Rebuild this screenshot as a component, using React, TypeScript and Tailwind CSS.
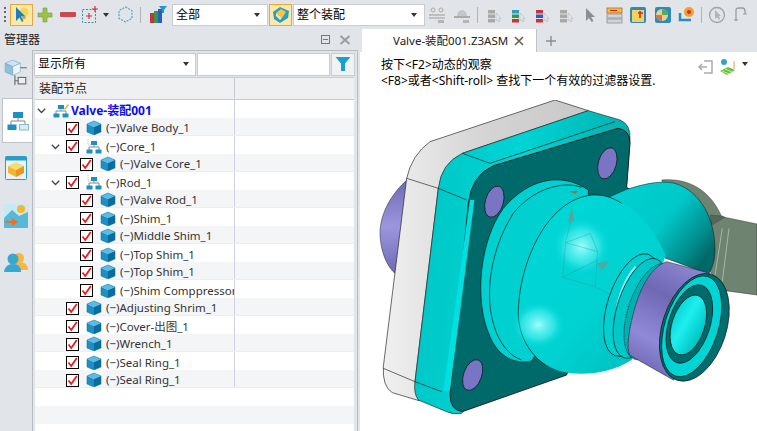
import React from "react";

const FONT = { fontFamily: '"Noto Sans", "Noto Sans CJK SC", sans-serif' };

function Cube({ size = 16 }: { size?: number }) {
  return (
    <svg width={size} height={size} viewBox="0 0 16 16" className="shrink-0">
      <path d="M8 1 L15 4 L8 7 L1 4 Z" fill="#58bde6" />
      <path d="M1 4 L8 7 L8 15 L1 12 Z" fill="#1c8fc4" />
      <path d="M15 4 L8 7 L8 15 L15 12 Z" fill="#0b6d9e" />
      <path d="M8 1 L15 4 L15 12 L8 15 L1 12 L1 4 Z" fill="none" stroke="#0a6a98" strokeWidth="0.5" />
    </svg>
  );
}

function Hier({ pen }: { pen?: boolean }) {
  return (
    <svg width="16" height="16" viewBox="0 0 16 16" className="shrink-0">
      <path d="M8 5 V8 M3 11 V8 H13 V11" stroke="#888" fill="none" />
      <rect x="5" y="2" width="6" height="4" fill="#1c8fc4" />
      <rect x="0.5" y="10.5" width="6" height="4" fill="#1c8fc4" />
      <rect x="9.5" y="10.5" width="6" height="4" fill="#1c8fc4" />
      {pen ? <path d="M11 6 L15 1 L16 2 L12 7 Z" fill="#e6b030" /> : <path d="M2 0 V6 H5" stroke="#bbb" fill="none" strokeDasharray="1 1" />}
    </svg>
  );
}

function Check() {
  return (
    <span className="w-[13px] h-[13px] border border-black bg-white flex items-center justify-center shrink-0">
      <svg width="11" height="11" viewBox="0 0 11 11">
        <path d="M1.5 5.5 L4.2 9 L9.8 1" stroke="#f01818" strokeWidth="1.8" fill="none" />
      </svg>
    </span>
  );
}

function Chevron() {
  return (
    <svg width="9" height="6" viewBox="0 0 9 6" className="shrink-0">
      <path d="M0.8 0.8 L4.5 4.5 L8.2 0.8" stroke="#444" strokeWidth="1.3" fill="none" />
    </svg>
  );
}

function Caret() {
  return <span className="w-0 h-0 border-l-[3.5px] border-r-[3.5px] border-t-[4px] border-l-transparent border-r-transparent border-t-[#333] shrink-0" />;
}

function Gray({ children, w = 24 }: { children: React.ReactNode; w?: number }) {
  return (
    <span className="flex items-center justify-center shrink-0" style={{ width: w }}>
      <svg width="20" height="20" viewBox="0 0 20 20">{children}</svg>
    </span>
  );
}

const rows: { t: string; lvl: 1 | 2; kind: "cube" | "hier"; chev?: boolean }[] = [
  { t: "(−)Valve Body_1", lvl: 1, kind: "cube" },
  { t: "(−)Core_1", lvl: 1, kind: "hier", chev: true },
  { t: "(−)Valve Core_1", lvl: 2, kind: "cube" },
  { t: "(−)Rod_1", lvl: 1, kind: "hier", chev: true },
  { t: "(−)Valve Rod_1", lvl: 2, kind: "cube" },
  { t: "(−)Shim_1", lvl: 2, kind: "cube" },
  { t: "(−)Middle Shim_1", lvl: 2, kind: "cube" },
  { t: "(−)Top Shim_1", lvl: 2, kind: "cube" },
  { t: "(−)Top Shim_1", lvl: 2, kind: "cube" },
  { t: "(−)Shim Comppressor", lvl: 2, kind: "cube" },
  { t: "(−)Adjusting Shrim_1", lvl: 1, kind: "cube" },
  { t: "(−)Cover-出图_1", lvl: 1, kind: "cube" },
  { t: "(−)Wrench_1", lvl: 1, kind: "cube" },
  { t: "(−)Seal Ring_1", lvl: 1, kind: "cube" },
  { t: "(−)Seal Ring_1", lvl: 1, kind: "cube" },
];

function Toolbar() {
  return (
    <div className="h-[29px] flex items-center shrink-0 pl-[3px]">
      <span className="w-[4px] h-[16px] mr-[3px] flex flex-col justify-between items-center shrink-0">
        <i className="w-[2px] h-[2px] bg-[#667]" /><i className="w-[2px] h-[2px] bg-[#667]" /><i className="w-[2px] h-[2px] bg-[#667]" /><i className="w-[2px] h-[2px] bg-[#667]" />
      </span>
      <span className="w-[23px] h-[22px] bg-[#fde9a6] border border-[#e5a83e] flex items-center justify-center shrink-0">
        <svg width="18" height="18" viewBox="0 0 18 18">
          <circle cx="11" cy="6" r="4.5" fill="#f3d65a" />
          <rect x="9.5" y="10" width="3" height="3" fill="#caa040" />
          <path d="M3 1 L3 15 L6.5 11.5 L9 16 L10.5 15 L8 10.5 L12 10 Z" fill="#1c7fc0" />
        </svg>
      </span>
      <span className="w-[23px] flex justify-center shrink-0">
        <svg width="16" height="16" viewBox="0 0 16 16"><path d="M6 1 H10 V6 H15 V10 H10 V15 H6 V10 H1 V6 H6 Z" fill="#9cc24c" stroke="#7a9c38" strokeWidth="0.6" /></svg>
      </span>
      <span className="w-[24px] flex justify-center shrink-0">
        <span className="w-[16px] h-[5px] rounded-[1px] bg-[#c84a50]" />
      </span>
      <span className="w-[20px] flex justify-center shrink-0">
        <svg width="18" height="18" viewBox="0 0 18 18">
          <rect x="1.5" y="3.5" width="13" height="13" fill="none" stroke="#3a8ca8" strokeDasharray="2 1.5" />
          <path d="M8 7 V13 M5 10 H11 M14 0 V6 M11 3 H17" stroke="#d0343c" strokeWidth="1.2" />
        </svg>
      </span>
      <span className="w-[12px] flex justify-center shrink-0"><Caret /></span>
      <span className="w-[26px] flex justify-center shrink-0">
        <svg width="17" height="17" viewBox="0 0 17 17"><path d="M8.5 1 L15 4.7 V12.3 L8.5 16 L2 12.3 V4.7 Z" fill="none" stroke="#5fa0b8" strokeDasharray="2 1.2" strokeWidth="1.2" /></svg>
      </span>
      <span className="w-px h-[16px] bg-[#b0b4b8] ml-[2px] mr-[7px] shrink-0" />
      <span className="w-[20px] flex justify-center mr-[4px] shrink-0">
        <svg width="18" height="18" viewBox="0 0 18 18">
          <rect x="1" y="7" width="4" height="10" fill="#c8323a" /><rect x="5" y="5" width="4" height="12" fill="#2e9a4a" /><rect x="9" y="3" width="4" height="14" fill="#2c5cc0" />
          <path d="M10 0 H18 L15 4 V7 H13 V4 Z" fill="#1c9cc8" />
        </svg>
      </span>
      <span className="w-[96px] h-[22px] bg-white border border-[#c8ccd0] flex items-center pl-[3px] pr-[7px] justify-between text-[12px] text-black shrink-0"><span>全部</span><Caret /></span>
      <span className="w-[23px] h-[22px] ml-[1px] bg-[#fde9a6] border border-[#e5a83e] flex items-center justify-center shrink-0">
        <svg width="18" height="18" viewBox="0 0 18 18">
          <path d="M1 6 L8 1 L17 5 L16 12 L8 17 L2 13 Z" fill="#2a9cc8" />
          <path d="M4 7 L9 3 L14 6 L10 12 Z" fill="#f4c83c" /><path d="M4 7 L10 12 L8 14 L4 10 Z" fill="#f8e8a0" />
        </svg>
      </span>
      <span className="w-[132px] h-[22px] ml-[1px] bg-white border border-[#c8ccd0] flex items-center pl-[3px] pr-[7px] justify-between text-[12px] text-black shrink-0"><span>整个装配</span><Caret /></span>
      <Gray w={23}><circle cx="6" cy="5" r="2" fill="none" stroke="#aaa" /><circle cx="14" cy="5" r="2" fill="none" stroke="#aaa" /><path d="M2 10 H18 M2 13 H18" stroke="#999" /><rect x="11" y="15" width="6" height="3" fill="#b4b4b4" /></Gray>
      <Gray w={27}><path d="M5 11 A5 6 0 0 1 15 11 Z" fill="#c4c6ca" /><path d="M2 12 H18" stroke="#999" strokeWidth="1.5" /><rect x="11" y="15" width="6" height="3" fill="#b4b4b4" /></Gray>
      <span className="w-px h-[16px] bg-[#b0b4b8] mx-[2px] shrink-0" />
      <span className="w-[3px] shrink-0" />
      {[["#a8a8a8", "#a8a8a8", "#a8a8a8"], ["#2a9cc8", "#2e9a4a", "#c8323a"], ["#c8323a", "#2c5cc0", "#c8323a"], ["#a8a8a8", "#a8a8a8", "#a8a8a8"]].map((c, i) => (
        <Gray key={i} w={24}>
          <rect x="3" y="5" width="7" height="3.5" fill={c[0]} /><rect x="3" y="9.5" width="7" height="3.5" fill={c[1]} /><rect x="3" y="14" width="7" height="3.5" fill={c[2]} />
          <path d="M11 8 V16 L12.5 14.5 L14 17 L15 16 L14 13.5 L16 13.5 Z" fill="#e4e8ec" stroke="#b0b8c0" strokeWidth="0.6" />
        </Gray>
      ))}
      <Gray w={22}><path d="M6 3 V16 L9 13 L11.5 17 L13.5 16 L11 12 L15 12 Z" fill="#8a8f96" /></Gray>
      <Gray w={25}><rect x="3" y="3" width="15" height="5" fill="#f0c040" stroke="#a06030" strokeWidth="0.7" /><path d="M6 5.5 H13" stroke="#d02020" /><rect x="3" y="9" width="15" height="4" fill="#d0d4d8" stroke="#808890" strokeWidth="0.7" /><rect x="3" y="14" width="15" height="4" fill="#d0d4d8" stroke="#808890" strokeWidth="0.7" /></Gray>
      <Gray w={24}><rect x="2" y="2" width="16" height="16" rx="2" fill="#2a8cb8" /><rect x="4" y="5" width="12" height="12" fill="#f4d060" /><path d="M10 8 H15 M12 6 V13" stroke="#d02828" strokeWidth="1.6" /></Gray>
      <Gray w={25}><rect x="2" y="2" width="16" height="16" rx="2" fill="#2a8cb8" /><circle cx="9" cy="10" r="6" fill="#e8d090" /><path d="M9 4 A6 6 0 0 1 15 10 H9 Z" fill="#58a860" /><path d="M3 10 H9 V16 A6 6 0 0 1 3 10" fill="#e07040" /></Gray>
      <Gray w={24}><path d="M3 8 V15 H14" stroke="#2a8cb8" strokeWidth="2.5" fill="none" /><circle cx="12" cy="7" r="5" fill="#f0a030" /><circle cx="12" cy="7" r="2" fill="#d03030" /></Gray>
      <span className="w-px h-[16px] bg-[#b0b4b8] mx-[2px] shrink-0" />
      <Gray w={26}><circle cx="10" cy="10" r="7.5" fill="none" stroke="#a0a4a8" strokeWidth="1.3" /><path d="M8 5 V14 L10 12 L12 15 L13 14 L12 11 L14 11 Z" fill="#b0b4b8" /></Gray>
      <Gray w={22}><path d="M5 16 V5 Q5 3 8 3 H11 Q14 3 14 6 V9" fill="none" stroke="#9a9ea2" strokeWidth="1.3" /><path d="M3 15 H7 M12 9 H16" stroke="#9a9ea2" /></Gray>
    </div>
  );
}

function Rail() {
  return (
    <div className="w-[32px] flex flex-col items-center shrink-0">
      <div className="h-[48px] flex flex-col items-center pt-[9px] shrink-0 w-full">
        <svg width="24" height="39" viewBox="0 0 22 36">
          <path d="M8 1 L15 4 L8 7 L1 4 Z" fill="#cfe4f0" stroke="#6aa0c0" strokeWidth="0.5" />
          <path d="M1 4 L8 7 V15 L1 12 Z" fill="#8cc0dc" stroke="#6aa0c0" strokeWidth="0.5" />
          <path d="M15 4 L8 7 V15 L15 12 Z" fill="#eef5fa" stroke="#6aa0c0" strokeWidth="0.5" />
          <path d="M15 8 H21 M10 15 V24 M10 20 H13" stroke="#666" fill="none" />
          <rect x="13" y="17" width="7" height="6" fill="#eee" stroke="#666" />
        </svg>
      </div>
      <div className="w-[30px] ml-[2px] h-[45px] bg-white border border-r-0 border-[#c0c4c8] flex items-center justify-center shrink-0">
        <svg width="22" height="20" viewBox="0 0 22 20">
          <path d="M11 6 V10 M4 14 V10 H18 V14" stroke="#888" fill="none" />
          <rect x="6" y="1" width="10" height="6" fill="#1c8fc4" />
          <rect x="0.5" y="13.5" width="9" height="5.5" fill="#1c8fc4" />
          <rect x="12.5" y="13.5" width="9" height="5.5" fill="#d8ecf6" stroke="#8cb8d0" />
        </svg>
      </div>
      <div className="h-[48px] flex items-center justify-center shrink-0 pt-[2px]">
        <svg width="22" height="24" viewBox="0 0 22 24">
          <rect x="0.5" y="0.5" width="21" height="23" rx="1" fill="#e8f4fa" stroke="#2a9cc8" />
          <rect x="0.5" y="0.5" width="21" height="4" fill="#2a9cc8" />
          <path d="M11 6 L19 10 L11 14 L3 10 Z" fill="#f8dc70" />
          <path d="M3 10 L11 14 V21 L3 17 Z" fill="#f0b830" /><path d="M19 10 L11 14 V21 L19 17 Z" fill="#e89820" />
        </svg>
      </div>
      <div className="h-[50px] flex items-center justify-center shrink-0">
        <svg width="24" height="24" viewBox="0 0 24 24">
          <rect width="24" height="24" fill="#c8e8f4" />
          <path d="M0 14 L8 6 L15 12 L24 8 V24 H0 Z" fill="#58b8d8" />
          <circle cx="17" cy="5" r="4" fill="#f4b830" />
          <path d="M1 17 H8 V14 L14 18 L8 22 V19 H1 Z" fill="#f07020" />
        </svg>
      </div>
      <div className="h-[44px] flex items-center justify-center shrink-0">
        <svg width="24" height="22" viewBox="0 0 24 22">
          <circle cx="15" cy="6" r="5" fill="#f8b840" /><path d="M10 18 Q10 10 15 10 Q24 10 24 18 Z" fill="#f8b840" />
          <circle cx="9" cy="7" r="5.5" fill="#38a8d0" /><path d="M0 20 Q1 12 9 12 Q17 12 17 20 Z" fill="#38a8d0" />
        </svg>
      </div>
    </div>
  );
}

function Manager() {
  return (
    <div className="w-[358px] flex flex-col shrink-0 min-h-0">
      <div className="h-[21px] flex items-center shrink-0 pl-[4px] pr-[6px] text-[12px] text-[#222]">
        <span className="flex-1">管理器</span>
        <span className="w-[9px] h-[9px] border border-[#777] flex items-center justify-center mr-[9px]"><i className="w-[5px] h-px bg-[#777]" /></span>
        <svg width="12" height="10" viewBox="0 0 12 10" className="mr-[1px]"><path d="M1.5 1 L10.5 9 M10.5 1 L1.5 9" stroke="#9a9ea2" strokeWidth="2" fill="none" /></svg>
      </div>
      <div className="flex-1 flex min-h-0">
        <Rail />
        <div className="w-[326px] border border-b-0 border-[#b8bcc0] flex flex-col min-h-0 overflow-hidden">
          <div className="h-[26px] flex items-center gap-[1px] shrink-0 pl-[1px]">
            <span className="w-[162px] h-[23px] bg-white border border-[#c8ccd0] flex items-center justify-between pl-[3px] pr-[6px] text-[12px] text-black"><span>显示所有</span><Caret /></span>
            <span className="w-[133px] h-[23px] bg-white border border-[#c8ccd0]" />
            <span className="w-[24px] h-[23px] bg-[#f0f2f4] border border-[#c8ccd0] flex items-center justify-center">
              <svg width="16" height="16" viewBox="0 0 16 16"><path d="M0.5 1 H15.5 L10 7.5 V15 H6 V7.5 Z" fill="#1aa0d0" /></svg>
            </span>
          </div>
          <div className="flex-1 flex flex-col min-h-0 ml-[2px] mr-[3px]">
            <div className="h-[23px] flex shrink-0 bg-[#eff0f2] border-t border-b border-[#c8ccd0] text-[12px] text-[#222] items-center">
              <span className="w-[200px] pl-[4px] border-r border-[#c8ccd0] h-full flex items-center">装配节点</span>
            </div>
            <div className="flex-1 min-h-0 bg-white overflow-hidden text-[11.5px] text-[#333]">
              <div className="h-[18px] flex">
                <div className="w-[200px] border-r border-[#d0d0e4] flex items-center pl-[2px] pt-[3px] shrink-0 overflow-hidden">
                  <Chevron />
                  <span className="w-[7px] shrink-0" />
                  <Hier pen />
                  <span className="ml-[2px] text-[12px] font-bold text-[#0a0aff] whitespace-nowrap">Valve-装配001</span>
                </div>
              </div>
              {rows.map((r, i) => (
                <div key={i} className={`h-[18px] flex ${i % 2 === 0 ? "bg-[#f4f5f7] border-b border-[#eceef0]" : "bg-white"}`}>
                  <div className={`w-[200px] border-r border-[#d0d0e4] flex items-center pt-[3px] shrink-0 overflow-hidden ${r.lvl === 1 ? "pl-[31px]" : "pl-[45px]"}`}>
                    <span className="relative flex items-center">
                      {r.chev && <span className="absolute -left-[15px] top-[4px]"><Chevron /></span>}
                      <Check />
                    </span>
                    <span className="w-[7px] shrink-0" />
                    {r.kind === "cube" ? <Cube /> : <Hier />}
                    <span className="ml-[4px] whitespace-nowrap">{r.t}</span>
                  </div>
                </div>
              ))}
              <div className="h-[18px]" />
              <div className="h-[18px] bg-[#f4f5f7]" />
            </div>
          </div>
        </div>
      </div>
    </div>
  );
}

function Model() {
  return (
    <svg viewBox="0 0 1146 993" width="382" height="331" className="absolute left-[15px] top-[48px]">
      <defs>
        <linearGradient id="cy" x1="0" y1="0" x2="1" y2="0.15">
          <stop offset="0" stopColor="#00c4c4" /><stop offset="0.5" stopColor="#00d4d4" /><stop offset="1" stopColor="#00b0b0" />
        </linearGradient>
        <linearGradient id="bulb" x1="0" y1="0" x2="0.9" y2="1">
          <stop offset="0" stopColor="#00d8d8" /><stop offset="0.6" stopColor="#00d2d2" /><stop offset="1" stopColor="#00bcbc" />
        </linearGradient>
        <linearGradient id="rear" x1="0" y1="0" x2="1" y2="0.7">
          <stop offset="0" stopColor="#00d2d2" /><stop offset="0.55" stopColor="#00c8c8" /><stop offset="0.85" stopColor="#008e8e" /><stop offset="1" stopColor="#006868" />
        </linearGradient>
        <linearGradient id="gr" x1="0" y1="0" x2="1" y2="0">
          <stop offset="0" stopColor="#f0f0f0" /><stop offset="0.5" stopColor="#d4d4d4" /><stop offset="1" stopColor="#c8c8c8" />
        </linearGradient>
        <linearGradient id="pu" x1="0.7" y1="0" x2="0.3" y2="1">
          <stop offset="0" stopColor="#8f89d6" /><stop offset="0.35" stopColor="#6f69b4" /><stop offset="0.72" stopColor="#9089d8" /><stop offset="1" stopColor="#6c66b0" />
        </linearGradient>
        <linearGradient id="pu2" x1="0" y1="0" x2="0" y2="1">
          <stop offset="0" stopColor="#6f69b4" /><stop offset="0.5" stopColor="#9c96de" /><stop offset="1" stopColor="#6f69b4" />
        </linearGradient>
        <linearGradient id="hole" x1="0" y1="0" x2="1" y2="0.4">
          <stop offset="0" stopColor="#00d0d0" /><stop offset="0.5" stopColor="#20eeee" /><stop offset="1" stopColor="#00c8c8" />
        </linearGradient>
        <radialGradient id="hi"><stop offset="0" stopColor="#a8ffff" stopOpacity="0.95" /><stop offset="0.6" stopColor="#50f0f0" stopOpacity="0.6" /><stop offset="1" stopColor="#00d8d8" stopOpacity="0" /></radialGradient>
      </defs>
      <path d="M98,238 C50,280 15,340 15,400 C15,450 35,500 62,522 Z" fill="url(#pu2)" stroke="#222" strokeWidth="1.5" />
      <path d="M860,240 C950,232 1010,280 1040,350 L1146,372 V585 L1050,572 L1010,522 Z" fill="#6f8470" stroke="#333" strokeWidth="1.5" />
      <path d="M1010,375 L1050,352 L1042,348 L1005,345 Z" fill="#55685a" stroke="#333" strokeWidth="1" />
      <path d="M1042,385 L1020,525 M1062,385 L1042,545" stroke="#c0d0c0" strokeWidth="2" />
      <path d="M165,125 L540,0 L640,32 L262,160 L190,265 L120,845 L132,902 L52,878 Q22,860 25,800 L95,235 Q110,165 165,125 Z" fill="url(#gr)" stroke="#222" strokeWidth="2" />
      <path d="M95,235 L190,265 M25,805 L120,845" stroke="#222" strokeWidth="2" />
      <path d="M262,160 L640,32 L735,60 Q768,72 765,120 L755,250 L260,940 Q235,945 215,935 L130,900 Q115,880 120,845 L190,265 Q198,190 262,160 Z" fill="url(#cy)" stroke="#222" strokeWidth="2" />
      <path d="M262,160 L345,190 M345,190 L720,65 M190,265 L275,300 M120,845 L200,875" stroke="#222" strokeWidth="2" />
      <path d="M355,197 L728,85 Q765,88 765,130 L755,262 Q762,270 775,268 L760,300 L575,825 L262,935 Q225,930 225,885 L280,310 Q290,225 355,197 Z" fill="#006a6a" stroke="#111" strokeWidth="2.5" />
      <path d="M285,300 L298,300 L225,870 L205,872 Z" fill="#00e0e0" />
      <ellipse cx="697" cy="190" rx="27" ry="48" transform="rotate(16 697 190)" fill="#7a74c4" stroke="#111" strokeWidth="2" />
      <ellipse cx="358" cy="305" rx="27" ry="48" transform="rotate(16 358 305)" fill="#7a74c4" stroke="#111" strokeWidth="2" />
      <ellipse cx="293" cy="825" rx="27" ry="48" transform="rotate(20 293 825)" fill="#7a74c4" stroke="#111" strokeWidth="2" />
      <path d="M700,292 L755,268 C790,258 850,238 900,250 C980,275 1020,360 1020,450 C1020,480 1012,505 1000,522 L860,470 Z" fill="url(#rear)" stroke="#111" strokeWidth="1.5" />
      <path d="M640,270 C560,215 460,235 385,325 C315,420 295,600 345,710 C370,770 420,795 470,783 L640,500 Z" fill="#00d0d0" stroke="#111" strokeWidth="2" />
      <path d="M620,262 C560,240 470,270 415,340 C350,440 320,590 365,700 C385,745 410,770 440,780" fill="none" stroke="#111" strokeWidth="2" />
      <path d="M430,640 C430,500 510,300 650,285 C760,280 830,375 872,465 L770,780 C700,825 600,830 545,810 C470,780 430,720 430,640 Z" fill="url(#bulb)" />
      <path d="M430,640 C430,500 510,300 650,285 C680,283 710,290 740,310" fill="none" stroke="#111" strokeWidth="2" />
      <path d="M430,640 C430,690 450,750 510,795" fill="none" stroke="#111" strokeWidth="2" />
      <ellipse cx="620" cy="440" rx="85" ry="85" fill="url(#hi)" />
      <ellipse cx="490" cy="675" rx="80" ry="70" fill="url(#hi)" />
      <g fill="none" stroke="#3a9090" strokeWidth="1.5" opacity="0.75">
        <path d="M572,428 L646,400 L668,455 L660,560 L563,532 Z M572,428 L668,455 M563,532 L668,480 M590,350 L572,428 M660,560 L735,600" />
      </g>
      <path d="M590,320 L578,365 L598,362 Z" fill="#50a8a0" />
      <path d="M665,490 L705,483 L680,510 Z" fill="#50a8a0" />
      <path d="M700,585 L742,602 L705,600 Z" fill="#70b0a0" />
      <path d="M582,274 L610,274 L600,281 Z" fill="#b06a20" />
      {/* collar */}
      <ellipse cx="770" cy="615" rx="72" ry="160" transform="rotate(18 770 615)" fill="#00d0d0" stroke="#111" strokeWidth="2" />
      <path d="M782,500 C750,535 730,590 724,640" fill="none" stroke="#7ffafa" strokeWidth="7" />
      <ellipse cx="795" cy="625" rx="68" ry="156" transform="rotate(18 795 625)" fill="#00c8c8" stroke="#111" strokeWidth="2" />
      <ellipse cx="825" cy="635" rx="66" ry="150" transform="rotate(18 825 635)" fill="#00b0b0" stroke="#111" strokeWidth="2" strokeDasharray="3 2" />
      {/* sleeve */}
      <path d="M875,485 L1005,520 L1040,700 L895,840 L763,765 C755,740 760,700 775,640 C795,560 830,500 875,485 Z" fill="url(#pu)" stroke="#111" strokeWidth="1.5" />
      {/* end face */}
      <ellipse cx="958" cy="682" rx="96" ry="167" transform="rotate(18 958 682)" fill="#006e6e" stroke="#111" strokeWidth="2" />
      <ellipse cx="950" cy="679" rx="80" ry="157" transform="rotate(18 950 679)" fill="#00d4d4" stroke="#111" strokeWidth="2" />
      <ellipse cx="943" cy="672" rx="62" ry="122" transform="rotate(18 943 672)" fill="#006a6a" stroke="#111" strokeWidth="2" />
      <ellipse cx="940" cy="675" rx="49" ry="93" transform="rotate(18 940 675)" fill="url(#hole)" stroke="#111" strokeWidth="2" />
    </svg>
  );
}

function Viewport() {
  return (
    <div className="flex-1 flex flex-col min-w-0 ml-[2px]">
      <div className="h-[23px] flex items-stretch shrink-0 pl-[2px]">
        <div className="w-[175px] bg-white flex items-center pl-[31px] text-[11.5px] text-[#222] border-r border-[#c0c4c8]">
          <span className="whitespace-nowrap">Valve-装配001.Z3ASM</span>
          <svg width="10" height="10" viewBox="0 0 10 10" className="ml-[6px]"><path d="M1 1 L9 9 M9 1 L1 9" stroke="#6a6048" strokeWidth="1.6" /></svg>
        </div>
        <span className="ml-[9px] flex items-center">
          <svg width="10" height="10" viewBox="0 0 10 10"><path d="M5 0 V10 M0 5 H10" stroke="#8a8e92" strokeWidth="1.4" /></svg>
        </span>
      </div>
      <div className="flex-1 bg-white relative overflow-hidden min-h-0">
        <Model />
        <div className="relative flex justify-between pl-[21px] pt-[5px] pr-[9px]">
          <div className="text-[12px] leading-[16px] text-black">
            <div>按下&lt;F2&gt;动态的观察</div>
            <div>&lt;F8&gt;或者&lt;Shift-roll&gt; 查找下一个有效的过滤器设置.</div>
          </div>
          <div className="flex items-start gap-[4px] pt-[1px]">
            <svg width="16" height="16" viewBox="0 0 16 16" className="mt-[1px]"><path d="M6 2 H14 V14 H6 M1 8 H9 M4 5 L1 8 L4 11" fill="none" stroke="#a8acb0" strokeWidth="1.5" /></svg>
            <svg width="20" height="20" viewBox="0 0 20 20"><circle cx="6" cy="4" r="3" fill="#38a0c8" /><path d="M2 13 L10 9 L17 12 L9 17 Z" fill="#60c050" /><path d="M4 13 L11 16 M7 11 L14 14" stroke="#f0e860" /><path d="M16 3 V11" stroke="#e0a040" /></svg>
            <span className="mt-[7px]"><Caret /></span>
          </div>
        </div>
      </div>
    </div>
  );
}

export default function App() {
  return (
    <div className="w-[757px] h-[431px] bg-[#e1e4e8] flex flex-col overflow-hidden" style={FONT}>
      <Toolbar />
      <div className="flex flex-1 min-h-0">
        <Manager />
        <Viewport />
      </div>
    </div>
  );
}
